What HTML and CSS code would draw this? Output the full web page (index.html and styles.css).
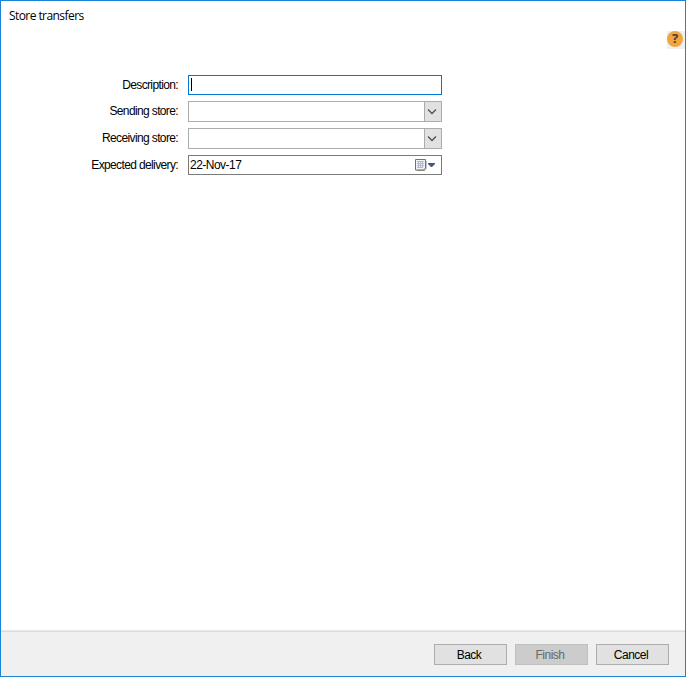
FILE: index.html
```html
<!DOCTYPE html>
<html lang="en">
<head>
<meta charset="utf-8">
<title>Store transfers</title>
<link rel="stylesheet" href="styles.css">
</head>
<body>
<div class="window">
  <header class="titlebar">Store transfers</header>
  <div class="help-row">
    <button class="help" aria-label="Help"><span class="help-dot">?</span></button>
  </div>
  <main class="form">
    <div class="row">
      <label class="label">Description:</label>
      <div class="field focused"><span class="caret"></span></div>
    </div>
    <div class="row">
      <label class="label">Sending store:</label>
      <div class="field combo">
        <span class="drop"><svg width="15" height="19" viewBox="0 0 15 19"><path d="M3 7.500l4 4 4-4" fill="none" stroke="#505050" stroke-width="1.300"/></svg></span>
      </div>
    </div>
    <div class="row">
      <label class="label">Receiving store:</label>
      <div class="field combo">
        <span class="drop"><svg width="15" height="19" viewBox="0 0 15 19"><path d="M3 7.500l4 4 4-4" fill="none" stroke="#505050" stroke-width="1.300"/></svg></span>
      </div>
    </div>
    <div class="row">
      <label class="label">Expected delivery:</label>
      <div class="field date">
        <span class="date-text">22-Nov-17</span>
        <svg class="calendar" width="21" height="14" viewBox="0 0 21 14">
          <path d="M.5 1.500h10v8.500l-2 2H.5z" fill="#f0f2f8" stroke="#77706c"/>
          <path d="M11 3v7.500L9.500 12.500H2" fill="none" stroke="#77706c" stroke-width=".8"/>
          <path d="M2 3.500h7M2 5.500h7M2 7.500h7M2 9.500h6M3.500 3v7M5.500 3v7M7.500 3v7" fill="none" stroke="#a9b1c2" stroke-width=".8"/>
          <path d="M13 5h7v1l-3 3h-1l-3-3z" fill="#415782"/>
        </svg>
      </div>
    </div>
  </main>
  <footer class="footer">
    <button class="button">Back</button>
    <button class="button" disabled>Finish</button>
    <button class="button">Cancel</button>
  </footer>
</div>
</body>
</html>
```

FILE: styles.css
```css
* { box-sizing: border-box; }
body {
  margin: 0;
  background: #fff;
  color: #000;
  font: 12px/14px "Liberation Sans", Arial, sans-serif;
  letter-spacing: -0.63px;
}
.window {
  display: flex;
  flex-direction: column;
  width: 686px;
  height: 677px;
  border: 1px solid #1883d7;
}
.titlebar {
  height: 29px;
  padding: 7px 8px 0;
  font: 12px/16px "Open Sans", "Segoe UI", sans-serif;
  letter-spacing: -0.57px;
}
.help-row {
  display: flex;
  justify-content: flex-end;
  height: 45px;
}
.help {
  display: flex;
  width: 18px;
  height: 18px;
  margin-top: 1px;
  padding: 0;
  border: 0;
  background: #f0f0f0;
}
.help-dot {
  width: 16px;
  height: 16px;
  border-radius: 50%;
  background: #f0a63c;
  color: #3f3f3f;
  font: bold 13px/15px "Open Sans", sans-serif;
  text-align: center;
}
.form {
  display: flex;
  flex-direction: column;
  gap: 6px;
  flex: 1;
}
.row {
  display: flex;
  gap: 10px;
}
.label {
  width: 177px;
  padding-top: 3px;
  text-align: right;
}
.field {
  display: flex;
  width: 254px;
  height: 20px;
  border: 1px solid #7a7a7a;
}
.focused { border-color: #0078d7; }
.caret {
  width: 1px;
  height: 13px;
  margin: 2px 0 0 2px;
  background: #000;
}
.combo {
  height: 21px;
  justify-content: flex-end;
  border-color: #acacac;
}
.drop {
  width: 17px;
  height: 19px;
  border-left: 1px solid #acacac;
  background: #e1e1e1;
}
.drop svg { display: block; }
.date {
  justify-content: space-between;
  padding: 0 5px 0 1px;
}
.date-text {
  padding-top: 2px;
  letter-spacing: -0.52px;
}
.calendar { margin-top: 2px; }
.footer {
  display: flex;
  justify-content: flex-end;
  gap: 8px;
  height: 46px;
  padding: 13px 16px 0;
  border-top: 1px solid #e8e8e8;
  background: #f0f0f0;
  box-shadow: inset 0 1px #dcdcdc;
}
.button {
  width: 73px;
  height: 21px;
  padding: 0 3px 0 0;
  border: 1px solid #adadad;
  background: #e1e1e1;
  color: #000;
  font: inherit;
  letter-spacing: -0.5px;
}
.button:disabled {
  border-color: #bfbfbf;
  background: #ccc;
  color: #686868;
}
```
